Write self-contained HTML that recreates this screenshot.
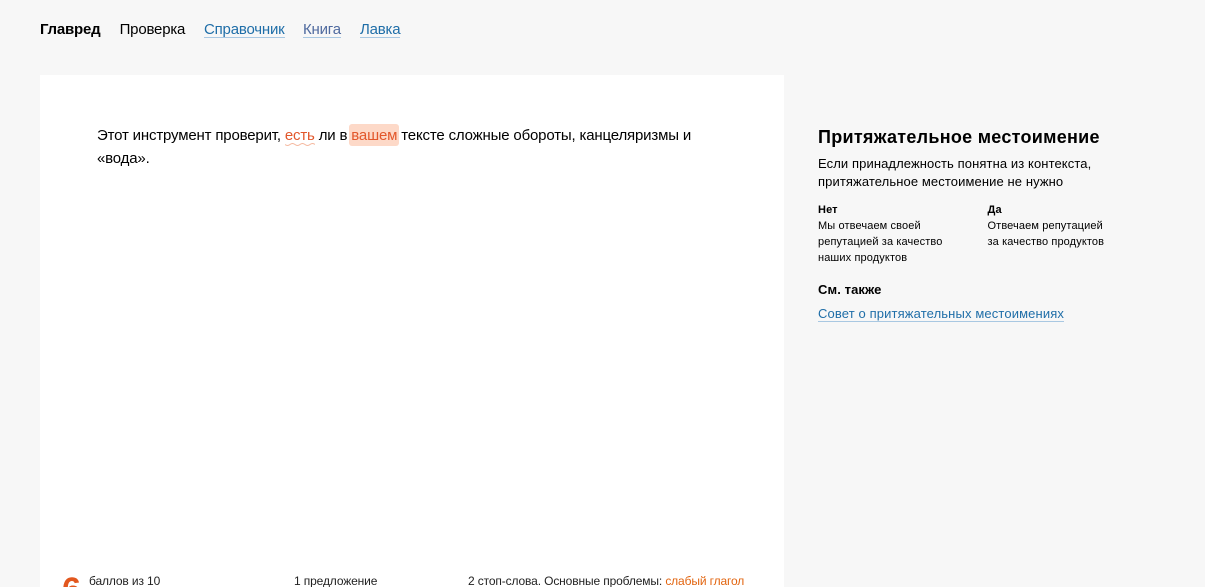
<!DOCTYPE html>
<html lang="ru">
<head>
<meta charset="utf-8">
<style>
html,body{margin:0;padding:0;width:1205px;height:587px;overflow:hidden}
body{position:relative;background:#f7f7f7;font-family:"Liberation Sans",Arial,sans-serif;color:#000}
.t{position:absolute;white-space:nowrap}
.l{color:#1f6ea8;border-bottom:1px solid #a9c8e2;line-height:16px;height:16px}
.n{font-size:15px;line-height:18px;letter-spacing:-.2px}
.sm{font-size:11px;line-height:16px;letter-spacing:.12px}
.p{font-size:15px;line-height:24px;letter-spacing:-.17px}
.f{font-size:12px;line-height:16px;color:#222;letter-spacing:-.13px}
</style>
</head>
<body>
<div class="t n" style="left:40px;top:21px;font-weight:bold">Главред</div>
<div class="t n" style="left:119.6px;top:21px">Проверка</div>
<div class="t n l" style="left:204px;top:21px">Справочник</div>
<div class="t n l" style="left:303px;top:21px;color:#4f6a9f">Книга</div>
<div class="t n l" style="left:360px;top:21px">Лавка</div>

<div style="position:absolute;left:40px;top:75px;width:744px;height:512px;background:#fff;overflow:hidden">
<div class="t" style="left:22px;top:495px;font-size:34px;line-height:40px;font-weight:bold;color:#e2571e;letter-spacing:0">6</div>
</div>

<div class="t p" style="left:97px;top:124px">Этот инструмент проверит, <span style="color:#e2572b">есть</span> ли в <span style="color:#e2572b;background:#fdd9c8;border-radius:3px;padding:3px 2px 1px;margin:0 -2px;display:inline-block;line-height:18px">вашем</span> тексте сложные обороты, канцеляризмы и</div>
<div class="t p" style="left:97px;top:147px">«вода».</div>
<svg style="position:absolute;left:285px;top:143px" width="30" height="4" viewBox="0 0 30 4"><path d="M0 1.5Q2.5 3.5 5 1.5T10 1.5T15 1.5T20 1.5T25 1.5T30 1.5" fill="none" stroke="#f5b9a0" stroke-width="1"/></svg>

<div class="t" style="left:818px;top:126px;font-size:18px;line-height:22px;font-weight:bold;letter-spacing:.28px">Притяжательное местоимение</div>
<div class="t" style="left:818px;top:155px;font-size:13px;line-height:18px;letter-spacing:.1px">Если принадлежность понятна из контекста,<br>притяжательное местоимение не нужно</div>
<div class="t sm" style="left:818px;top:202px"><b>Нет</b><br>Мы отвечаем своей<br>репутацией за качество<br>наших продуктов</div>
<div class="t sm" style="left:987.5px;top:202px"><b>Да</b><br>Отвечаем репутацией<br>за качество продуктов</div>
<div class="t" style="left:818px;top:281px;font-size:13px;line-height:18px;font-weight:bold;letter-spacing:.1px">См. также</div>
<div class="t l" style="left:818px;top:305px;font-size:13px;letter-spacing:.13px;line-height:18px">Совет о притяжательных местоимениях</div>

<div class="t f" style="left:89px;top:573px">баллов из 10</div>
<div class="t f" style="left:294px;top:573px">1 предложение</div>
<div class="t f" style="left:468px;top:573px">2 стоп-слова. Основные проблемы: <span style="color:#e2640f">слабый глагол</span></div>
</body>
</html>
